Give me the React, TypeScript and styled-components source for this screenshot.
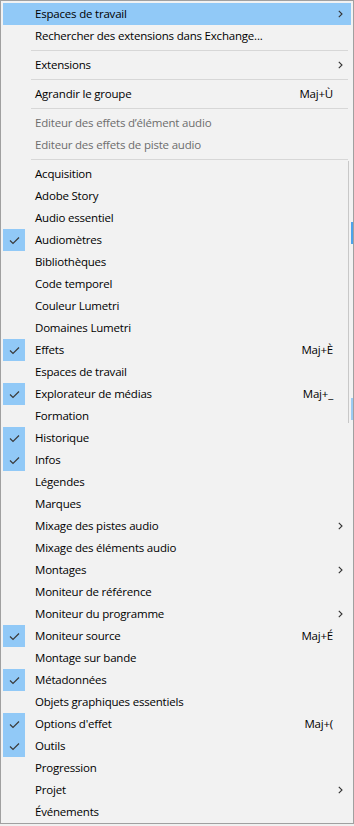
import { createGlobalStyle, styled } from "styled-components";

const GlobalStyle = createGlobalStyle`
  html, body {
    margin: 0;
    padding: 0;
    background: #f0f0f0;
  }
`;

const Menu = styled.div`
  position: relative;
  box-sizing: border-box;
  width: 354px;
  height: 824px;
  padding: 2px;
  background: #f2f2f2;
  border: 1px solid #a0a0a0;
  font-family: "Segoe UI", "Open Sans", "Noto Sans", sans-serif;
  font-size: 11.5px;
  letter-spacing: -0.2px;
  color: #000;
  overflow: hidden;
`;

const Row = styled.div<{ $active?: boolean; $disabled?: boolean }>`
  display: grid;
  grid-template-columns: 22px 1fr auto 18px;
  align-items: center;
  height: 22px;
  background: ${(p) => (p.$active ? "#91c9f7" : "transparent")};
  color: ${(p) => (p.$disabled ? "#6d6d6d" : "#000")};
`;

const Check = styled.div<{ $on?: boolean }>`
  display: flex;
  align-items: center;
  justify-content: center;
  height: 22px;
  background: ${(p) => (p.$on ? "#91c9f7" : "transparent")};
`;

const Label = styled.span`
  padding-left: 10px;
  margin-top: -2px;
  white-space: nowrap;
`;

const Shortcut = styled.span`
  margin-top: -2px;
  white-space: nowrap;
`;

const Arrow = styled.div`
  display: flex;
  align-items: center;
  padding-left: 5px;
`;

const Separator = styled.div`
  height: 1px;
  margin: 3px 3px 3px 28px;
  background: #d7d7d7;
`;

const Ghost = styled.div`
  position: absolute;
  left: 347px;
  top: 160px;
  width: 1px;
  height: 262px;
  background: #c8c8c8;
`;

const GhostBlock = styled.div<{ $top: number; $color: string }>`
  position: absolute;
  left: 350px;
  top: ${(p) => p.$top}px;
  width: 3px;
  height: 22px;
  background: ${(p) => p.$color};
`;

type Item = {
  label: string;
  checked?: boolean;
  shortcut?: string;
  sub?: boolean;
};

const panels: Item[] = [
  { label: "Acquisition" },
  { label: "Adobe Story" },
  { label: "Audio essentiel" },
  { label: "Audiomètres", checked: true },
  { label: "Bibliothèques" },
  { label: "Code temporel" },
  { label: "Couleur Lumetri" },
  { label: "Domaines Lumetri" },
  { label: "Effets", checked: true, shortcut: "Maj+È" },
  { label: "Espaces de travail" },
  { label: "Explorateur de médias", checked: true, shortcut: "Maj+_" },
  { label: "Formation" },
  { label: "Historique", checked: true },
  { label: "Infos", checked: true },
  { label: "Légendes" },
  { label: "Marques" },
  { label: "Mixage des pistes audio", sub: true },
  { label: "Mixage des éléments audio" },
  { label: "Montages", sub: true },
  { label: "Moniteur de référence" },
  { label: "Moniteur du programme", sub: true },
  { label: "Moniteur source", checked: true, shortcut: "Maj+É" },
  { label: "Montage sur bande" },
  { label: "Métadonnées", checked: true },
  { label: "Objets graphiques essentiels" },
  { label: "Options d'effet", checked: true, shortcut: "Maj+(" },
  { label: "Outils", checked: true },
  { label: "Progression" },
  { label: "Projet", sub: true },
  { label: "Événements" },
];

function Chevron() {
  return (
    <svg width="5" height="8" viewBox="0 0 5 8">
      <path d="M0.8 0.8 L4 4 L0.8 7.2" fill="none" stroke="#333" strokeWidth="1.1" />
    </svg>
  );
}

function Tick() {
  return (
    <svg width="11" height="9" viewBox="0 0 11 9">
      <path d="M1 4.5 L4 7.5 L10 1.5" fill="none" stroke="#3a3a3a" strokeWidth="1.2" />
    </svg>
  );
}

function MenuRow({
  label,
  checked,
  shortcut,
  sub,
  active,
  disabled,
}: Item & { active?: boolean; disabled?: boolean }) {
  return (
    <Row $active={active} $disabled={disabled}>
      <Check $on={checked}>{checked && <Tick />}</Check>
      <Label>{label}</Label>
      <Shortcut>{shortcut}</Shortcut>
      <Arrow>{sub && <Chevron />}</Arrow>
    </Row>
  );
}

export default function App() {
  return (
    <>
      <GlobalStyle />
      <Menu>
        <MenuRow label="Espaces de travail" sub active />
        <MenuRow label="Rechercher des extensions dans Exchange..." />
        <Separator />
        <MenuRow label="Extensions" sub />
        <Separator />
        <MenuRow label="Agrandir le groupe" shortcut="Maj+Ù" />
        <Separator />
        <MenuRow label="Editeur des effets d’élément audio" disabled />
        <MenuRow label="Editeur des effets de piste audio" disabled />
        <Separator />
        {panels.map((item) => (
          <MenuRow key={item.label} {...item} />
        ))}
        <Ghost />
        <GhostBlock $top={221} $color="#4da3eb" />
        <GhostBlock $top={397} $color="#9ccbf3" />
      </Menu>
    </>
  );
}
